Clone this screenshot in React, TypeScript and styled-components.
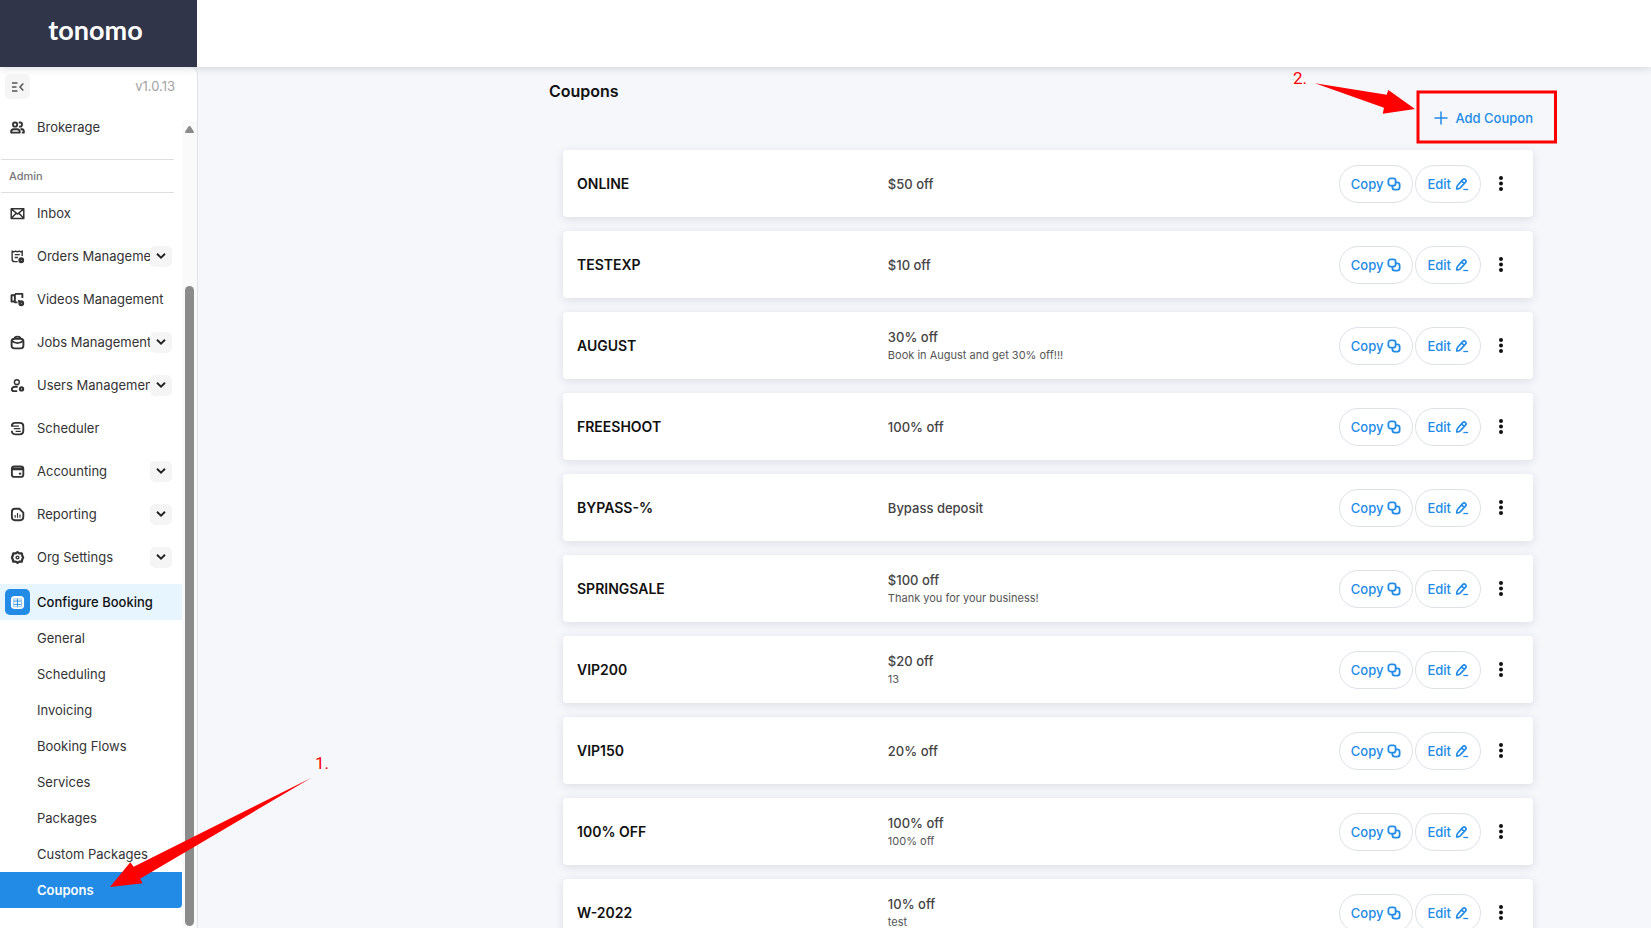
import React from 'react';
import styled, { createGlobalStyle, css } from 'styled-components';

const GlobalStyle = createGlobalStyle`
  *, *::before, *::after { box-sizing: border-box; }
  body { margin: 0; background: #f5f7fb; font-family: Inter, sans-serif; color: #333; }
  button { font: inherit; border: 0; padding: 0; background: none; cursor: pointer; }
  ul { list-style: none; margin: 0; padding: 0; }
  a { color: inherit; text-decoration: none; }
  svg { display: block; flex: none; }
`;

const BLUE = '#228be6';

const Shell = styled.div`
  position: relative;
  display: flex;
  flex-direction: column;
  height: 100vh;
  overflow: hidden;
`;

const TopBar = styled.header`
  display: flex;
  flex: none;
  height: 67px;
  background: #fff;
  box-shadow: 0 1px 8px rgba(40, 44, 70, 0.18);
  z-index: 1;
`;

const Brand = styled.a`
  display: flex;
  align-items: center;
  justify-content: center;
  width: 197px;
  padding: 0 6px 8px 0;
  background: #30354a;
  && { color: #fff; }
  font: 700 27px/32px Lato, sans-serif;
`;

const Body = styled.div`
  display: flex;
  flex: 1;
  min-height: 0;
`;

const Sidebar = styled.aside`
  display: flex;
  flex-direction: column;
  flex: none;
  width: 198px;
  background: #fff;
  border-right: 1px solid #dfe1e8;
  border-top-right-radius: 8px;
`;

const SidebarTop = styled.div`
  display: flex;
  flex: none;
  align-items: flex-start;
  justify-content: space-between;
  height: 42px;
  padding: 7px 22px 0 5px;
`;

const CollapseButton = styled.button`
  display: grid;
  place-items: center;
  width: 25px;
  height: 25px;
  border-radius: 5px;
  background: #f5f5f5;
  color: #555;
`;

const Version = styled.span`
  font-size: 13px;
  line-height: 25px;
  color: #a3a3a3;
`;

const NavArea = styled.div`
  display: flex;
  flex: 1;
  min-height: 0;
`;

const Nav = styled.nav`
  width: 182px;
  overflow: hidden;
`;

const Track = styled.div`
  display: flex;
  flex-direction: column;
  justify-content: space-between;
  align-items: center;
  width: 15px;
  margin-top: 12px;
  padding: 5px 0 2px;
  background: #fafafa;
`;

const Thumb = styled.div`
  width: 9px;
  height: 80%;
  border-radius: 5px;
  background: #8b8b8b;
`;

const SectionLabel = styled.h2`
  margin: 14px 8px 2px 1px;
  padding-left: 8px;
  border: solid #dedede;
  border-width: 1px 0;
  font-size: 11px;
  font-weight: 500;
  line-height: 32px;
  color: #777;
`;

const NavList = styled.ul`
  display: flex;
  flex-direction: column;
  gap: 7px;
`;

const NavRow = styled.li`
  display: flex;
  align-items: center;
  height: 36px;
  padding-right: 10px;
`;

const NavLink = styled.a`
  display: flex;
  align-items: center;
  flex: 1;
  min-width: 0;
  padding-left: 5px;
  gap: 7px;
  overflow: hidden;
  white-space: nowrap;
  font-size: 13px;
  line-height: 20px;
`;

const IconTile = styled.span<{ $active?: boolean }>`
  display: grid;
  place-items: center;
  flex: none;
  width: 25px;
  height: 26px;
  border-radius: 5px;
  ${(p) => p.$active && css`background: ${BLUE}; color: #fff;`}
`;

const ExpandButton = styled.button`
  display: grid;
  place-items: center;
  flex: none;
  width: 22px;
  height: 21px;
  border-radius: 5px;
  background: #f5f5f5;
  color: #222;
`;

const ActiveGroup = styled.div`
  margin-top: 9px;
`;

const ActiveRow = styled.div`
  display: flex;
  align-items: center;
  height: 36px;
  background: #e7f5ff;
  color: #111;
  font-weight: 500;
`;

const SubLink = styled.a<{ $current?: boolean }>`
  display: block;
  padding-left: 37px;
  font-size: 13px;
  line-height: 36px;
  ${(p) => p.$current && css`
    && { color: #fff; }
    background: ${BLUE};
    font-weight: 600;
    border-radius: 0 0 4px 0;
  `}
`;

const Main = styled.main`
  display: flex;
  flex: 1;
  justify-content: flex-end;
  min-width: 0;
  padding: 0 104px 0 24px;
  overflow: hidden;
`;

const Content = styled.div`
  flex: 0 1 998px;
  min-width: 0;
`;

const PageHead = styled.div`
  display: flex;
  justify-content: space-between;
  height: 83px;
  padding: 12px 14px 0 0;
`;

const Title = styled.h1`
  margin: 0;
  font-size: 16px;
  font-weight: 600;
  line-height: 24px;
  color: #111;
`;

const AddButton = styled.button`
  display: flex;
  align-items: center;
  align-self: flex-start;
  gap: 7px;
  height: 38px;
  margin-top: 20px;
  color: ${BLUE};
  font-size: 13px;
  font-weight: 500;
`;

const CouponList = styled.ul`
  display: flex;
  flex-direction: column;
  gap: 14px;
  padding: 0 14px;
`;

const CouponCard = styled.li`
  display: flex;
  align-items: center;
  height: 67px;
  padding: 0 14px;
  border-radius: 4px;
  background: #fff;
  box-shadow: 0 2px 10px rgba(40, 44, 70, 0.12);
`;

const CouponName = styled.h3`
  flex: 0 0 33%;
  margin: 0;
  font-size: 14px;
  font-weight: 600;
  line-height: 20px;
  color: #111;
`;

const CouponInfo = styled.div`
  flex: 1;
  font-size: 13px;
  font-weight: 500;
  line-height: 18px;
  color: #444;
`;

const CouponNote = styled.p`
  margin: 0;
  font-size: 11px;
  font-weight: 400;
  line-height: 18px;
  color: #555;
`;

const Actions = styled.div`
  display: flex;
  align-items: center;
  gap: 2px;
`;

const PillButton = styled.button`
  display: flex;
  align-items: center;
  justify-content: center;
  gap: 4px;
  height: 38px;
  && { padding: 0 11px; border: 1px solid #dee2e6; }
  border-radius: 19px;
  color: ${BLUE};
  font-size: 13px;
  font-weight: 500;
  line-height: 20px;
`;

const MoreButton = styled.button`
  display: grid;
  place-items: center;
  width: 36px;
  height: 38px;
  color: #111;
`;

const Note = styled.svg<{ $side: 'left' | 'right' }>`
  position: absolute;
  z-index: 2;
  pointer-events: none;
  font: 17px Roboto, sans-serif;
  ${(p) => p.$side === 'left'
    ? css`left: 100px; top: 750px;`
    : css`right: 91px; top: 67px;`}
`;

const icons: Record<string, React.ReactNode> = {
  brokerage: (
    <>
      <rect x="3.200" y="2.600" width="4.400" height="4.400" rx="2" />
      <path d="M9.300 2.600h1.600c1.200 0 1.900.9 1.900 2.100S12.100 7 10.900 7H9.500M1.200 13.400v-.8c0-1.800 1-2.800 2.800-2.800h3.600c1.800 0 2.800 1 2.800 2.800v.8zM11.300 9.600c2.100 0 3.500.9 3.500 2.600v1.200h-2.200" />
    </>
  ),
  inbox: <path d="M1.300 2.800h13.400v10.400H1.300zM1.600 3.200 8 8.600l6.400-5.400M1.600 12.900l4.700-5M14.400 12.900l-4.700-5" strokeWidth="1.600" />,
  orders: (
    <>
      <path d="M13 7.500V2.200l-1.600.9-1.700-.9-1.800.9-1.800-.9-1.700.9L2.300 2.200v8.600c0 1.700.9 2.700 2.600 2.700h3.300M5 6h5.500M5 9h3.500" strokeWidth="1.500" />
      <circle cx="12" cy="12" r="1.800" strokeWidth="2.600" />
    </>
  ),
  videos: (
    <>
      <path d="M4.800 3.500H1.600v6.600h3.200M5.200 2h8v4.500M5.200 2v9h2.800" strokeWidth="2" />
      <circle cx="12" cy="12" r="1.800" strokeWidth="2.600" />
      <path d="M9.500 8.500v2" />
    </>
  ),
  jobs: (
    <>
      <rect x="1.700" y="4" width="12.600" height="10.200" rx="3" />
      <path d="M5 3.600C5 2 6 1.700 8 1.700s3 .3 3 1.900M2 6.500c3.500 2.600 8.500 2.600 12 0M7 8.700h2" />
    </>
  ),
  users: (
    <>
      <circle cx="7.300" cy="4.400" r="2.600" strokeWidth="1.500" />
      <path d="M8.300 9.300H5.500c-2.200 0-3.600 1-3.600 2.700 0 1.300.9 2 2.300 2h3.500" strokeWidth="2" />
      <circle cx="12.300" cy="11.600" r="1.700" strokeWidth="2.300" />
    </>
  ),
  scheduler: (
    <>
      <path d="M2 5.500C2 3 3.200 2 5.500 2h5C13 2 14.200 3 14.200 5.500v5c0 2.600-1.200 3.700-3.700 3.700h-5C3.200 14.200 2 13 2 10.500" />
      <path d="M1.300 5.500h8.200M4 8.200h7M6 11h5.500" strokeWidth="1.300" />
    </>
  ),
  accounting: (
    <>
      <rect x="2" y="2.700" width="12.200" height="11" rx="2.600" />
      <path d="M2 5.300h12.200" strokeWidth="2.800" />
      <path d="M9.500 10.300h2.500" />
    </>
  ),
  reporting: (
    <>
      <path d="M10 1.900H5.200C2.900 1.900 2 3 2 5.200v5.600c0 2.300.9 3.400 3.200 3.400h5.600c2.400 0 3.400-1.100 3.400-3.400V6z" />
      <path d="M5.500 8.500v3M8 6.500v5M10.600 8v3.500" strokeWidth="1.200" />
    </>
  ),
  settings: (
    <>
      <path d="M8 2.200 9.900 3.700l2.600-.1.600 2.600L14 8l-.9 1.800-.6 2.600-2.600-.1L8 13.800l-1.900-1.500-2.600.1-.6-2.600L2 8l.9-1.800.6-2.600 2.600.1z" strokeWidth="2.400" />
      <circle cx="8" cy="8" r="1.500" strokeWidth="1.500" />
    </>
  ),
  booking: (
    <>
      <rect x="1" y="1" width="14" height="14" rx="4" fill="currentColor" stroke="none" />
      <path d="M8 3.500v9.500M3.500 6.500h9M3.500 10h9" stroke={BLUE} strokeWidth="1" />
      <path d="M3.700 4.200h8.600v8.300H3.700z" stroke="#8cc4f5" strokeWidth="1" />
    </>
  ),
};

const Icon = ({ name }: { name: string }) => (
  <svg width="15" height="15" viewBox="0 0 16 16" fill="none" stroke="currentColor" strokeWidth="2" strokeLinejoin="round" aria-hidden>
    {icons[name]}
  </svg>
);

const ChevronIcon = () => (
  <svg width="10" height="6" viewBox="0 0 10 6" fill="none" stroke="currentColor" strokeWidth="1.900" aria-hidden>
    <path d="M1 .8 5 4.600 9 .8" />
  </svg>
);

const CopyIcon = () => (
  <svg width="14" height="14" viewBox="0 0 14 14" fill="none" stroke="currentColor" strokeWidth="1.800" aria-hidden>
    <rect x="1.400" y="1.400" width="7.200" height="7.200" rx="2.200" />
    <path d="M8.600 5.400h1.700c1.500 0 2.300.8 2.300 2.300v2.600c0 1.500-.8 2.300-2.300 2.300H7.700c-1.500 0-2.300-.8-2.300-2.300V8.600" />
  </svg>
);

const EditIcon = () => (
  <svg width="14" height="14" viewBox="0 0 14 14" fill="none" stroke="currentColor" strokeWidth="1.700" strokeLinejoin="round" aria-hidden>
    <path d="m7.700 2.600-5 5.700c-.5.600-1 2.400-1 3.600 1 0 2.900-.5 3.500-1.100l5.300-5.700c.9-1 .9-1.700 0-2.500-.9-.9-1.800-.9-2.800 0zM7 4.400l2.200 2" />
    <path d="M8.300 12.500h4.900" strokeWidth="1.300" />
  </svg>
);

const navItems = [
  { label: 'Inbox', icon: 'inbox' },
  { label: 'Orders Management', icon: 'orders', expandable: true },
  { label: 'Videos Management', icon: 'videos' },
  { label: 'Jobs Management', icon: 'jobs', expandable: true },
  { label: 'Users Management', icon: 'users', expandable: true },
  { label: 'Scheduler', icon: 'scheduler' },
  { label: 'Accounting', icon: 'accounting', expandable: true },
  { label: 'Reporting', icon: 'reporting', expandable: true },
  { label: 'Org Settings', icon: 'settings', expandable: true },
];

const bookingPages = ['General', 'Scheduling', 'Invoicing', 'Booking Flows', 'Services', 'Packages', 'Custom Packages', 'Coupons'];

const coupons = [
  { name: 'ONLINE', value: '$50 off' },
  { name: 'TESTEXP', value: '$10 off' },
  { name: 'AUGUST', value: '30% off', note: 'Book in August and get 30% off!!!' },
  { name: 'FREESHOOT', value: '100% off' },
  { name: 'BYPASS-%', value: 'Bypass deposit' },
  { name: 'SPRINGSALE', value: '$100 off', note: 'Thank you for your business!' },
  { name: 'VIP200', value: '$20 off', note: '13' },
  { name: 'VIP150', value: '20% off' },
  { name: '100% OFF', value: '100% off', note: '100% off' },
  { name: 'W-2022', value: '10% off', note: 'test' },
];

const NavItem = ({ label, icon, expandable }: { label: string; icon: string; expandable?: boolean }) => (
  <NavRow>
    <NavLink href="#">
      <IconTile><Icon name={icon} /></IconTile>
      {label}
    </NavLink>
    {expandable && <ExpandButton aria-label={`Expand ${label}`}><ChevronIcon /></ExpandButton>}
  </NavRow>
);

export default function App() {
  return (
    <Shell>
      <GlobalStyle />
      <TopBar>
        <Brand href="#">tonomo</Brand>
      </TopBar>
      <Body>
        <Sidebar>
          <SidebarTop>
            <CollapseButton aria-label="Collapse menu">
              <svg width="12" height="10" viewBox="0 0 12 10" fill="none" stroke="currentColor" strokeWidth="1.500" aria-hidden>
                <path d="M0 1h5.500M0 5h4.500M0 9h5.500M11.300 1.500 8 5l3.300 3.500" />
              </svg>
            </CollapseButton>
            <Version>v1.0.13</Version>
          </SidebarTop>
          <NavArea>
            <Nav>
              <NavList>
                <NavItem label="Brokerage" icon="brokerage" />
              </NavList>
              <SectionLabel>Admin</SectionLabel>
              <NavList>
                {navItems.map((item) => <NavItem key={item.label} {...item} />)}
              </NavList>
              <ActiveGroup>
                <ActiveRow>
                  <NavLink href="#">
                    <IconTile $active><Icon name="booking" /></IconTile>
                    Configure Booking
                  </NavLink>
                </ActiveRow>
                <ul>
                  {bookingPages.map((page) => (
                    <li key={page}><SubLink href="#" $current={page === 'Coupons'}>{page}</SubLink></li>
                  ))}
                </ul>
              </ActiveGroup>
            </Nav>
            <Track>
              <svg width="9" height="7" viewBox="0 0 9 7" fill="#8b8b8b" aria-hidden>
                <path d="M4.500 0c.5 0 .8.2 1 .5L8.800 5.600c.4.700 0 1.400-.8 1.400H1C.2 7-.2 6.300.2 5.600L3.500.5c.2-.3.500-.5 1-.5z" />
              </svg>
              <Thumb />
            </Track>
          </NavArea>
        </Sidebar>
        <Main>
          <Content>
            <PageHead>
              <Title>Coupons</Title>
              <AddButton>
                <svg width="14" height="14" viewBox="0 0 14 14" stroke="currentColor" strokeWidth="1.500" aria-hidden>
                  <path d="M7 .5v13M.5 7h13" />
                </svg>
                Add Coupon
              </AddButton>
            </PageHead>
            <CouponList>
              {coupons.map((coupon) => (
                <CouponCard key={coupon.name}>
                  <CouponName>{coupon.name}</CouponName>
                  <CouponInfo>
                    {coupon.value}
                    {coupon.note && <CouponNote>{coupon.note}</CouponNote>}
                  </CouponInfo>
                  <Actions>
                    <PillButton>Copy <CopyIcon /></PillButton>
                    <PillButton>Edit <EditIcon /></PillButton>
                    <MoreButton aria-label={`More actions for ${coupon.name}`}>
                      <svg width="4" height="15" viewBox="0 0 4 15" fill="currentColor" aria-hidden>
                        <circle cx="2" cy="2" r="2" />
                        <circle cx="2" cy="7.500" r="2" />
                        <circle cx="2" cy="13" r="2" />
                      </svg>
                    </MoreButton>
                  </Actions>
                </CouponCard>
              ))}
            </CouponList>
          </Content>
        </Main>
      </Body>
      <Note $side="left" width="240" height="150" viewBox="100 750 240 150" fill="#f00">
        <text x="315" y="769">1.</text>
        <path d="M311 778 133.700 866.700l-3.400-4.400L110 887l32.700-3.700-2.700-4.600z" />
      </Note>
      <Note $side="right" width="270" height="80" viewBox="1290 67 270 80" fill="#f00">
        <text x="1293" y="84">2.</text>
        <path d="M1315 83.300 1386.700 94.700l1.600-4.700L1415 109l-32.300 4.700 1.300-6z" />
        <rect x="1418" y="92" width="137.500" height="50" fill="none" stroke="#f00" strokeWidth="3" />
      </Note>
    </Shell>
  );
}
